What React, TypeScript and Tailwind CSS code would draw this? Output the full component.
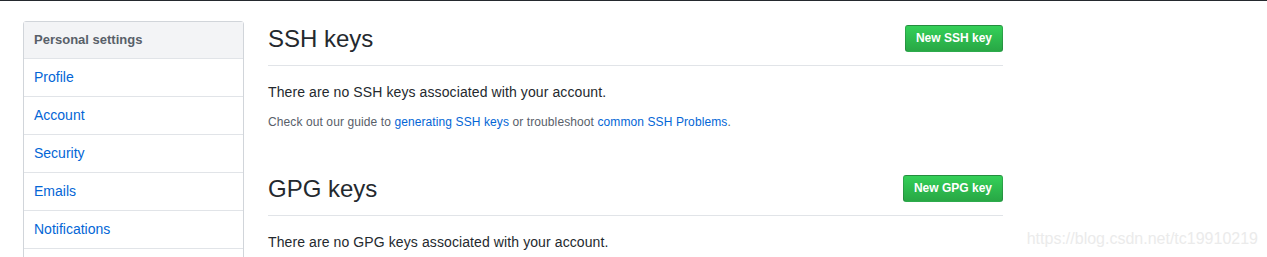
import React from "react";

const menu = ["Profile", "Account", "Security", "Emails", "Notifications"];

function KeySection({
  title,
  button,
  empty,
  children,
}: {
  title: string;
  button: string;
  empty: string;
  children?: React.ReactNode;
}) {
  return (
    <div>
      <div className="flex items-center justify-between border-b border-[#e1e4e8] pb-[11px]">
        <h2 className="mt-[1px] text-[24px] leading-[30px] font-normal text-[#24292e]">{title}</h2>
        <button className="rounded-[3px] border border-[rgba(27,31,35,0.2)] bg-gradient-to-b from-[#34d058] to-[#28a745] px-[10px] py-[3px] text-[12px] font-bold leading-[19px] text-white">
          {button}
        </button>
      </div>
      <p className="mt-[16px] text-[14px] leading-[21px] tracking-[0.1px] text-[#24292e]">{empty}</p>
      {children}
    </div>
  );
}

export default function App() {
  return (
    <div
      className="relative h-[257px] overflow-hidden bg-white"
      style={{ fontFamily: '"Liberation Sans", Arial, sans-serif' }}
    >
      <div className="h-px bg-[#24292e]" />
      <div className="flex gap-[24px] pl-[23px] pt-[20px]">
        <nav className="w-[221px] shrink-0 rounded-t-[3px] border border-[#d1d5da]">
          <div className="border-b border-[#e1e4e8] bg-[#f3f4f6] px-[10px] py-[8px] text-[13px] font-bold leading-[20px] text-[#586069]">
            Personal settings
          </div>
          {menu.map((item) => (
            <a
              key={item}
              href="#"
              className="block border-b border-[#e1e4e8] px-[10px] py-[8px] text-[14px] leading-[21px] text-[#0366d6]"
            >
              {item}
            </a>
          ))}
          <div className="h-[37px]" />
        </nav>
        <main className="w-[735px] pt-[2px]">
          <KeySection
            title="SSH keys"
            button="New SSH key"
            empty="There are no SSH keys associated with your account."
          >
            <p className="mt-[10px] text-[12px] leading-[18px] tracking-[0.1px] text-[#586069]">
              Check out our guide to{" "}
              <a href="#" className="text-[#0366d6]">generating SSH keys</a> or troubleshoot{" "}
              <a href="#" className="text-[#0366d6]">common SSH Problems</a>.
            </p>
          </KeySection>
          <div className="mt-[42px]">
            <KeySection
              title="GPG keys"
              button="New GPG key"
              empty="There are no GPG keys associated with your account."
            />
          </div>
        </main>
      </div>
      <div className="absolute right-[9px] top-[229px] text-[16px] leading-[20px] text-[#ebebeb]">
        https://blog.csdn.net/tc19910219
      </div>
    </div>
  );
}
